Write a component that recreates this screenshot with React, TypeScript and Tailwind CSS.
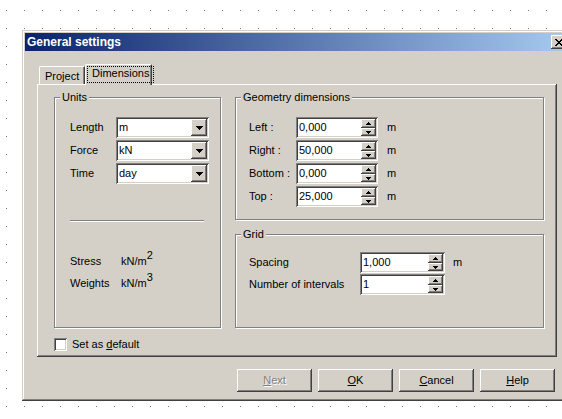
import React from "react";

const RAISED =
  "shadow-[inset_-1px_-1px_#404040,inset_1px_1px_#ffffff,inset_-2px_-2px_#808080,inset_2px_2px_#d4d0c8]";
const SUNKEN =
  "shadow-[inset_1px_1px_#808080,inset_-1px_-1px_#ffffff,inset_2px_2px_#404040,inset_-2px_-2px_#d4d0c8]";

function DownTri7() {
  return (
    <svg width="7" height="4" shapeRendering="crispEdges" fill="#000">
      <rect x="0" y="0" width="7" height="1" />
      <rect x="1" y="1" width="5" height="1" />
      <rect x="2" y="2" width="3" height="1" />
      <rect x="3" y="3" width="1" height="1" />
    </svg>
  );
}

function UpTri5() {
  return (
    <svg width="5" height="3" shapeRendering="crispEdges" fill="#000">
      <rect x="2" y="0" width="1" height="1" />
      <rect x="1" y="1" width="3" height="1" />
      <rect x="0" y="2" width="5" height="1" />
    </svg>
  );
}

function DownTri5() {
  return (
    <svg width="5" height="3" shapeRendering="crispEdges" fill="#000">
      <rect x="0" y="0" width="5" height="1" />
      <rect x="1" y="1" width="3" height="1" />
      <rect x="2" y="2" width="1" height="1" />
    </svg>
  );
}

function CloseX() {
  return (
    <svg width="8" height="7" shapeRendering="crispEdges" fill="#000">
      <rect x="0" y="0" width="2" height="1" />
      <rect x="6" y="0" width="2" height="1" />
      <rect x="1" y="1" width="2" height="1" />
      <rect x="5" y="1" width="2" height="1" />
      <rect x="2" y="2" width="4" height="1" />
      <rect x="3" y="3" width="2" height="1" />
      <rect x="2" y="4" width="4" height="1" />
      <rect x="1" y="5" width="2" height="1" />
      <rect x="5" y="5" width="2" height="1" />
      <rect x="0" y="6" width="2" height="1" />
      <rect x="6" y="6" width="2" height="1" />
    </svg>
  );
}

function Combo({ value }: { value: string }) {
  return (
    <div className={`w-[93px] h-[21px] bg-white ${SUNKEN} p-[2px] flex`}>
      <div className="flex-1 pl-[1px] leading-[17px]">{value}</div>
      <div
        className={`w-[16px] h-[17px] bg-[#d4d0c8] ${RAISED} flex items-center justify-center`}
      >
        <DownTri7 />
      </div>
    </div>
  );
}

function Spin({ value, wide }: { value: string; wide?: boolean }) {
  return (
    <div
      className={`${wide ? "w-[85px]" : "w-[82px]"} h-[21px] bg-white ${SUNKEN} p-[2px] flex`}
    >
      <div className="flex-1 pl-[1px] leading-[17px]">{value}</div>
      <div className="w-[15px] h-[17px] flex flex-col">
        <div
          className={`h-[9px] bg-[#d4d0c8] ${RAISED} flex items-center justify-center`}
        >
          <UpTri5 />
        </div>
        <div
          className={`h-[8px] bg-[#d4d0c8] ${RAISED} flex items-center justify-center`}
        >
          <DownTri5 />
        </div>
      </div>
    </div>
  );
}

function Group({
  label,
  className,
  children,
}: {
  label: string;
  className: string;
  children: React.ReactNode;
}) {
  return (
    <div
      className={`relative border border-[#808080] shadow-[1px_1px_0_#ffffff,inset_1px_1px_0_#ffffff] ${className}`}
    >
      <span className="absolute left-[5px] top-[-7px] bg-[#d4d0c8] px-[2px] leading-[13px]">
        {label}
      </span>
      {children}
    </div>
  );
}

function Btn({
  children,
  disabled,
}: {
  children: React.ReactNode;
  disabled?: boolean;
}) {
  return (
    <div
      className={`w-[75px] h-[23px] bg-[#d4d0c8] ${RAISED} flex items-center justify-center ${
        disabled ? "text-[#808080] [text-shadow:1px_1px_0_#ffffff]" : "text-black"
      }`}
    >
      {children}
    </div>
  );
}

export default function App() {
  return (
    <div className="w-[562px] h-[419px] overflow-hidden bg-white bg-[radial-gradient(circle_at_0.5px_0.5px,#777777_0.6px,transparent_0.9px)] bg-[size:18px_18px] bg-[position:6px_10px] pt-[30px] pl-[22px] font-['Liberation_Sans',Arial,sans-serif] text-[11px] leading-[13px] text-black">
      <div className="w-[550px] h-[371px] bg-[#d4d0c8] shadow-[inset_-1px_-1px_#404040,inset_1px_1px_#d4d0c8,inset_-2px_-2px_#808080,inset_2px_2px_#ffffff] p-[3px] flex flex-col">
        {/* Title bar */}
        <div className="h-[18px] bg-[linear-gradient(to_right,#0a246a,#a6caf0)] flex items-center pl-[2px] pr-[2px]">
          <span className="flex-1 text-white font-bold text-[12px] leading-[18px]">
            General settings
          </span>
          <div
            className={`w-[16px] h-[14px] bg-[#d4d0c8] ${RAISED} flex items-center justify-center`}
          >
            <CloseX />
          </div>
        </div>

        {/* Body */}
        <div className="flex flex-col pt-[13px] px-[12px]">
          {/* Tabs */}
          <div className="flex items-end ml-[2px] h-[20px]">
            <div className="w-[46px] h-[18px] border-t border-l border-white rounded-tl-[2px] border-r border-r-[#404040] shadow-[inset_-1px_0_#808080] pl-[5px] pt-[3px]">
              Project
            </div>
            <div className="relative z-10 -mb-px w-[67px] h-[21px] bg-[#d4d0c8] border-t border-l border-white rounded-tl-[2px] border-r border-r-[#404040] shadow-[inset_-1px_0_#808080] pl-[1px] pt-[1px]">
              <div className="inline-block border border-dotted border-black px-[4px] pb-[2px]">
                Dimensions
              </div>
            </div>
          </div>

          {/* Panel */}
          <div className={`h-[273px] ${RAISED} pt-[13px] pl-[17px] flex flex-col`}>
            <div className="flex">
              {/* Units */}
              <Group label="Units" className="w-[167px] h-[231px] pt-[19px] pl-[15px]">
                <div className="flex flex-col gap-[2px]">
                  <div className="flex items-center h-[21px]">
                    <span className="w-[46px]">Length</span>
                    <Combo value="m" />
                  </div>
                  <div className="flex items-center h-[21px]">
                    <span className="w-[46px]">Force</span>
                    <Combo value="kN" />
                  </div>
                  <div className="flex items-center h-[21px]">
                    <span className="w-[46px]">Time</span>
                    <Combo value="day" />
                  </div>
                </div>
                <div className="mt-[36px] w-[134px] h-[2px] border-t border-[#808080] border-b border-b-white" />
                <div className="mt-[33px] flex flex-col gap-[9px]">
                  <div className="flex">
                    <span className="w-[51px]">Stress</span>
                    <span>
                      kN/m<sup className="text-[11px] top-[-6px]">2</sup>
                    </span>
                  </div>
                  <div className="flex">
                    <span className="w-[51px]">Weights</span>
                    <span>
                      kN/m<sup className="text-[11px] top-[-6px]">3</sup>
                    </span>
                  </div>
                </div>
              </Group>

              {/* Right column */}
              <div className="ml-[14px] w-[309px] flex flex-col">
                <Group
                  label="Geometry dimensions"
                  className="h-[123px] pt-[19px] pl-[13px]"
                >
                  <div className="flex flex-col gap-[2px]">
                    {[
                      ["Left :", "0,000"],
                      ["Right :", "50,000"],
                      ["Bottom :", "0,000"],
                      ["Top :", "25,000"],
                    ].map(([l, v]) => (
                      <div key={l} className="flex items-center h-[21px]">
                        <span className="w-[47px]">{l}</span>
                        <Spin value={v} />
                        <span className="ml-[9px]">m</span>
                      </div>
                    ))}
                  </div>
                </Group>
                <Group label="Grid" className="mt-[14px] h-[94px] pt-[17px] pl-[13px]">
                  <div className="flex flex-col gap-[1px]">
                    <div className="flex items-center h-[21px]">
                      <span className="w-[111px]">Spacing</span>
                      <Spin value="1,000" wide />
                      <span className="ml-[8px]">m</span>
                    </div>
                    <div className="flex items-center h-[21px]">
                      <span className="w-[111px]">Number of intervals</span>
                      <Spin value="1" wide />
                    </div>
                  </div>
                </Group>
              </div>
            </div>

            {/* Checkbox */}
            <div className="mt-[10px] flex items-center">
              <div className={`w-[13px] h-[13px] bg-white ${SUNKEN}`} />
              <span className="ml-[5px]">
                Set as <span className="underline">d</span>efault
              </span>
            </div>
          </div>

          {/* Buttons */}
          <div className="mt-[12px] flex justify-end gap-[6px] pr-[2px]">
            <Btn disabled>
              <span>
                <span className="underline">N</span>ext
              </span>
            </Btn>
            <Btn>
              <span>
                <span className="underline">O</span>K
              </span>
            </Btn>
            <Btn>
              <span>
                <span className="underline">C</span>ancel
              </span>
            </Btn>
            <Btn>
              <span>
                <span className="underline">H</span>elp
              </span>
            </Btn>
          </div>
        </div>
      </div>
    </div>
  );
}
